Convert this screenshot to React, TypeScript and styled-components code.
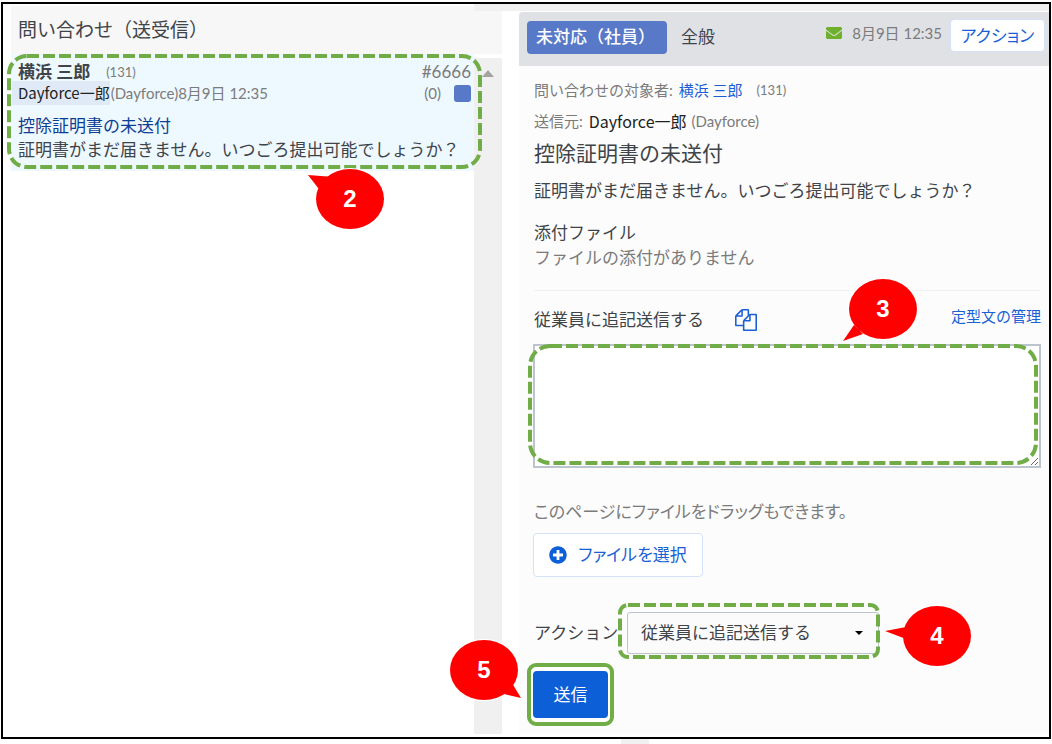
import React from "react";
import styled, { createGlobalStyle } from "styled-components";
import { FaEnvelope, FaPlusCircle } from "react-icons/fa";

const colors = {
  text: "#3f4448",
  muted: "#7b7b7b",
  link: "#1a5fd6",
  subject: "#0c3f94",
  badge: "#5879c7",
  primary: "#0d5fd8",
  marker: "#70ad47",
  callout: "#ff0000",
  line: "#bcc4ce",
  rail: "#f0f0f0",
};

const GlobalStyle = createGlobalStyle`
  * { box-sizing: border-box; }
  body {
    margin: 0;
    background: #fff;
    color: ${colors.text};
    font-family: Lato, "Noto Sans CJK JP", sans-serif;
    font-size: 17px;
    line-height: 24px;
  }
  button, select, textarea { font: inherit; color: inherit; margin: 0; }
  h1, h2, h3, p { margin: 0; font-weight: 400; font-size: inherit; }
  a { text-decoration: none; }
`;

const Page = styled.div`
  padding: 2px 1px 0;
  overflow: hidden;
`;

const Frame = styled.main`
  position: relative;
  display: grid;
  grid-template-columns: minmax(0, 491fr) 17px minmax(0, 530fr);
  border: 2px solid #000;
  padding: 2px 0 3px 8px;
  background: #fff;
`;

const TopStrip = styled.div`
  position: absolute;
  top: 0;
  right: 0;
  left: 45%;
  height: 7px;
  background: ${colors.rail};
`;

const PageFoot = styled.div`
  width: 28px;
  height: 6px;
  margin-left: 59%;
  background: ${colors.rail};
`;

/* Left: inquiry list */
const ListPanel = styled.section`
  grid-column: 1;
  display: flex;
  flex-direction: column;
`;

const ListHeader = styled.h1`
  height: 48px;
  padding: 12px 7px;
  background: #f7f7f7;
  && { font-size: 19px; }
`;

const ListBody = styled.div`
  flex: 1;
  display: flex;
`;

const List = styled.div`
  flex: 1;
  min-width: 0;
`;

const Rail = styled.div`
  width: 28px;
  margin-top: 4px;
  padding: 12px 8px;
  background: ${colors.rail};
`;

const RailArrow = styled.div`
  border: 6px solid transparent;
  border-top: 0;
  border-bottom: 7px solid #a3a3a3;
`;

const Item = styled.article`
  position: relative;
  padding: 8px 3px 9px 1px;
  background: #eef8ff;
  white-space: nowrap;
`;

const ItemRow = styled.div`
  display: flex;
  align-items: center;
  height: ${(p) => (p.$tall ? 22 : 20)}px;
  padding-left: ${(p) => (p.$flush ? 0 : 6)}px;
`;

const Spacer = styled.span`
  flex: 1;
`;

const Name = styled.strong`
  font-weight: 700;
  margin-right: 16px;
`;

const Small = styled.span`
  font-size: ${(p) => (p.$code ? 13 : 15)}px;
  color: ${colors.muted};
`;

const Sender = styled.span`
  font-family: "Noto Sans CJK JP", sans-serif;
  font-size: ${(p) => (p.$tagged ? 15 : 16)}px;
  color: #222;
  background: ${(p) => (p.$tagged ? "#dfeaf6" : "transparent")};
  padding-left: ${(p) => (p.$tagged ? 6 : 0)}px;
  margin-right: ${(p) => (p.$tagged ? 1 : 5)}px;
`;

const Number = styled.span`
  color: ${colors.muted};
`;

const StatusBox = styled.span`
  width: 17px;
  height: 17px;
  margin-left: 13px;
  border-radius: 3px;
  background: ${colors.badge};
`;

const Subject = styled.h2`
  && { margin-top: 10px; }
  padding-left: 6px;
  color: ${colors.subject};
`;

const ItemText = styled.p`
  padding-left: 6px;
`;

/* Right: inquiry detail */
const DetailPanel = styled.section`
  grid-column: 3;
  margin-top: 6px;
  background: #fcfcfc;
`;

const DetailHeader = styled.header`
  display: flex;
  align-items: flex-start;
  height: 54px;
  padding: 7px 4px 0 8px;
  border-top-left-radius: 4px;
  background: #dfe1e5;
  white-space: nowrap;
`;

const StatusBadge = styled.span`
  width: 140px;
  margin: 2px 14px 0 0;
  padding: 4px 9px 5px;
  border-radius: 4px;
  background: ${colors.badge};
  color: #fff;
  font-weight: 500;
`;

const Category = styled.span`
  padding-top: 6px;
`;

const SentAt = styled.span`
  display: flex;
  align-items: center;
  gap: 10px;
  padding-top: 2px;
  margin-right: 8px;
  font-size: 15px;
  color: ${colors.muted};
  svg { width: 16px; height: 16px; color: #6fb02c; }
`;

const OutlineButton = styled.button`
  display: inline-flex;
  align-items: center;
  justify-content: center;
  gap: 11px;
  width: ${(p) => (p.$large ? 170 : 95)}px;
  height: ${(p) => (p.$large ? 44 : 33)}px;
  padding: 0;
  border: 1px solid #d6e1fa;
  border-radius: 4px;
  background: #fff;
  font-feature-settings: "palt";
  && { color: ${colors.link}; }
  svg { width: 18px; height: 18px; color: ${colors.primary}; }
`;

const DetailBody = styled.div`
  padding: 12px 8px 8px 15px;
`;

const MetaLine = styled.p`
  display: flex;
  align-items: center;
  height: 24px;
  margin-bottom: 7px;
  color: ${colors.muted};
  white-space: nowrap;
`;

const MetaLabel = styled.span`
  margin-right: 6px;
  font-size: 15px;
`;

const Link = styled.a`
  align-self: flex-start;
  font-size: 15px;
  line-height: ${(p) => (p.$spaced ? 24 : 17)}px;
  color: ${colors.link};
  margin-right: ${(p) => (p.$spaced ? 14 : 0)}px;
`;

const Title = styled.h2`
  && { font-size: 21px; margin: -3px 0 10px; }
  line-height: 32px;
`;

const Attachments = styled.div`
  margin-top: 18px;
  padding-bottom: 20px;
  border-bottom: 1px solid #f1f1f1;
`;

const Muted = styled.p`
  && { margin-top: 1px; }
  color: ${colors.muted};
`;

const ReplyHead = styled.div`
  display: flex;
  align-items: center;
  margin: 17px 0 12px;
`;

const IconButton = styled.button`
  display: flex;
  margin-left: 31px !important;
  padding: 0;
  border: 0;
  background: none;
  svg { width: 22px; height: 22px; fill: ${colors.link}; }
`;

const ReplyBox = styled.div`
  position: relative;
  display: flex;
  margin-left: -1px;
`;

const ReplyInput = styled.textarea`
  width: 100%;
  height: 124px;
  border: 2px solid ${colors.line};
  background: #fff;
  resize: vertical;
`;

const Hint = styled.p`
  && { margin: 32px 0 9px; }
  color: ${colors.muted};
  font-feature-settings: "palt";
`;

const FileRow = styled.div`
  display: flex;
  margin-left: -1px;
`;

const ActionRow = styled.div`
  display: flex;
  align-items: center;
  margin-top: 35px;
`;

const ActionLabel = styled.label`
  width: 93px;
`;

const SelectBox = styled.div`
  position: relative;
  display: flex;
  align-items: center;
  width: 252px;
`;

const Select = styled.select`
  appearance: none;
  width: 100%;
  height: 42px;
  padding: 0 13px;
  border: 1px solid ${colors.line};
  border-radius: 3px;
  background: #fbfbfb;
`;

const Caret = styled.span`
  position: absolute;
  right: 16px;
  border: 4px solid transparent;
  border-bottom: 0;
  border-top-color: #000;
  pointer-events: none;
`;

const SubmitMarker = styled.div`
  position: relative;
  width: 87px;
  margin: 9px 0 0 -7px;
  padding: 4px 2px;
  border: 4px solid ${colors.marker};
  border-radius: 9px;
  background: #fff;
`;

const SubmitButton = styled.button`
  display: block;
  width: 100%;
  height: 47px;
  border: 0;
  border-radius: 4px;
  background: ${colors.primary};
  && { color: #fff; }
`;

/* Annotations laid over the page */
const MarkerSvg = styled.svg`
  position: absolute;
  z-index: 1;
  top: ${(p) => p.$inset[0]}px;
  left: ${(p) => p.$inset[3]}px;
  width: calc(100% - ${(p) => p.$inset[1] + p.$inset[3]}px);
  height: calc(100% - ${(p) => p.$inset[0] + p.$inset[2]}px);
  pointer-events: none;
  rect {
    width: calc(100% - 4px);
    height: calc(100% - 4px);
    fill: none;
    stroke: ${colors.marker};
    stroke-width: 4px;
    stroke-dasharray: 12 4;
  }
`;

function Marker({ inset, radius }: { inset: number[]; radius: number }) {
  return (
    <MarkerSvg $inset={inset} aria-hidden="true">
      <rect x="2" y="2" rx={radius} />
    </MarkerSvg>
  );
}

const CalloutBox = styled.div`
  position: absolute;
  z-index: 2;
  top: ${(p) => p.$top}px;
  left: ${(p) => (p.$left !== undefined ? p.$left + "px" : "auto")};
  right: ${(p) => (p.$right !== undefined ? p.$right + "px" : "auto")};
  display: grid;
  place-items: center;
  width: 68px;
  height: 60px;
  color: #fff;
  font-family: "Liberation Sans", Arial, sans-serif;
  font-size: 24px;
  font-weight: 700;
  pointer-events: none;
  > * { grid-area: 1 / 1; }
  svg { overflow: visible; fill: ${colors.callout}; }
  span { position: relative; }
`;

function Callout({ n, tail, ...pos }: { n: number; tail: string; $top: number; $left?: number; $right?: number }) {
  return (
    <CalloutBox {...pos}>
      <svg width="68" height="60" aria-hidden="true">
        <polygon points={tail} stroke="#fff" strokeWidth="2" />
        <ellipse cx="34" cy="30" rx="35" ry="31" fill="#fff" />
        <polygon points={tail} />
        <ellipse cx="34" cy="30" rx="34" ry="30" />
      </svg>
      <span>{n}</span>
    </CalloutBox>
  );
}

const CopyIcon = () => (
  <svg viewBox="0 0 1792 1792" aria-hidden="true">
    <path d="M1696 384q40 0 68 28t28 68v1216q0 40-28 68t-68 28h-960q-40 0-68-28t-28-68v-288h-544q-40 0-68-28t-28-68v-672q0-40 20-88t48-76l408-408q28-28 76-48t88-20h416q40 0 68 28t28 68v328q68-40 128-40h416zm-544 213l-299 299h299v-299zm-640-384l-299 299h299v-299zm196 647l316-316v-416h-384v416q0 40-28 68t-68 28h-416v640h512v-256q0-40 20-88t48-76zm956 804v-1152h-384v416q0 40-28 68t-68 28h-416v640h896z" />
  </svg>
);

export default function App() {
  return (
    <Page>
      <GlobalStyle />
      <Frame>
        <TopStrip />
        <ListPanel>
          <ListHeader>問い合わせ（送受信）</ListHeader>
          <ListBody>
            <List>
              <Item>
                <ItemRow>
                  <Name>横浜 三郎</Name>
                  <Small $code>(131)</Small>
                  <Spacer />
                  <Number>#6666</Number>
                </ItemRow>
                <ItemRow $tall $flush>
                  <Sender $tagged>Dayforce一郎</Sender>
                  <Small>(Dayforce)</Small>
                  <Small>8月9日 12:35</Small>
                  <Spacer />
                  <Small>(0)</Small>
                  <StatusBox />
                </ItemRow>
                <Subject>控除証明書の未送付</Subject>
                <ItemText>証明書がまだ届きません。いつごろ提出可能でしょうか？</ItemText>
                <Marker inset={[0, -8, 2, -4]} radius={18} />
                <Callout n={2} $top={115} $left={305} tail="-8,6 18,8 6,24" />
              </Item>
            </List>
            <Rail>
              <RailArrow />
            </Rail>
          </ListBody>
        </ListPanel>

        <DetailPanel>
          <DetailHeader>
            <StatusBadge>未対応（社員）</StatusBadge>
            <Category>全般</Category>
            <Spacer />
            <SentAt>
              <FaEnvelope />
              <span>8月9日 12:35</span>
            </SentAt>
            <OutlineButton type="button">アクション</OutlineButton>
          </DetailHeader>
          <DetailBody>
            <MetaLine>
              <MetaLabel>問い合わせの対象者:</MetaLabel>
              <Link href="#employee" $spaced>横浜 三郎</Link>
              <Small $code>(131)</Small>
            </MetaLine>
            <MetaLine>
              <MetaLabel>送信元:</MetaLabel>
              <Sender>Dayforce一郎</Sender>
              <Small>(Dayforce)</Small>
            </MetaLine>
            <Title>控除証明書の未送付</Title>
            <p>証明書がまだ届きません。いつごろ提出可能でしょうか？</p>
            <Attachments>
              <h3>添付ファイル</h3>
              <Muted>ファイルの添付がありません</Muted>
            </Attachments>

            <ReplyHead>
              <label htmlFor="reply">従業員に追記送信する</label>
              <IconButton type="button" aria-label="コピー">
                <CopyIcon />
              </IconButton>
              <Spacer />
              <Link href="#templates">定型文の管理</Link>
            </ReplyHead>
            <ReplyBox>
              <ReplyInput id="reply" />
              <Marker inset={[0, 3, 3, -5]} radius={20} />
              <Callout n={3} $top={-65} $right={124} tail="-6,62 5,46 14,55" />
            </ReplyBox>
            <Hint>このページにファイルをドラッグもできます。</Hint>
            <FileRow>
              <OutlineButton type="button" $large>
                <FaPlusCircle />
                ファイルを選択
              </OutlineButton>
            </FileRow>

            <ActionRow>
              <ActionLabel htmlFor="action">アクション</ActionLabel>
              <SelectBox>
                <Select id="action" defaultValue="reply">
                  <option value="reply">従業員に追記送信する</option>
                </Select>
                <Caret />
                <Marker inset={[-9, -1, -5, -9]} radius={8} />
                <Callout n={4} $top={-6} $left={276} tail="-18,25 3,21 3,33" />
              </SelectBox>
            </ActionRow>
            <SubmitMarker>
              <SubmitButton type="submit">送信</SubmitButton>
              <Callout n={5} $top={-27} $left={-81} tail="71,58 54,54 62,43" />
            </SubmitMarker>
          </DetailBody>
        </DetailPanel>
      </Frame>
      <PageFoot />
    </Page>
  );
}
